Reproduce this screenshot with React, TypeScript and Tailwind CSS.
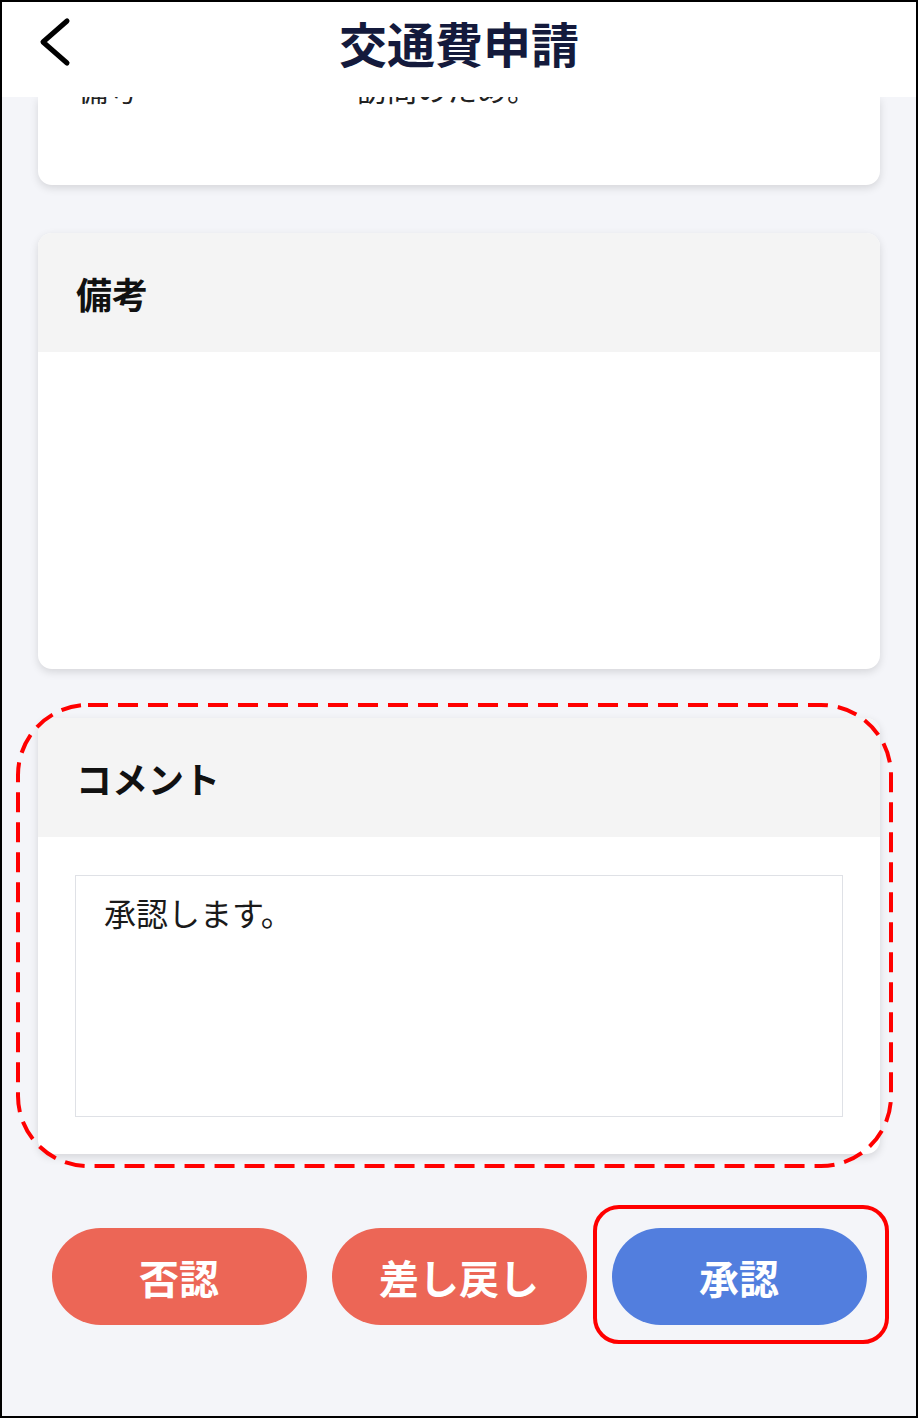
import React from 'react';

const font = { fontFamily: '"Noto Sans CJK JP", "Noto Sans", sans-serif' };

function SectionCard({ title, children }: { title: string; children?: React.ReactNode }) {
  return (
    <div className="bg-white rounded-[14px] overflow-hidden shadow-[0_3px_8px_rgba(0,0,0,0.13)]">
      <div className="h-[119px] bg-[#f4f4f4] flex items-center pl-[38px]">
        <h2 className="text-[36px] font-bold text-[#111] leading-none">{title}</h2>
      </div>
      <div className="h-[317px]">{children}</div>
    </div>
  );
}

export default function App() {
  return (
    <div style={font} className="w-[918px] h-[1418px] border-2 border-black bg-[#f4f5f9] overflow-hidden">
      {/* App bar */}
      <header className="h-[95px] bg-white relative flex justify-center pt-[14px]">
        <svg className="absolute left-[36px] top-[14px]" width="36" height="52" viewBox="0 0 36 52" fill="none">
          <path d="M29 5 L5 26 L29 47" stroke="#000" strokeWidth="5" strokeLinecap="round" strokeLinejoin="round" />
        </svg>
        <h1 className="text-[48px] font-bold leading-[52px] text-[#141a3c]">交通費申請</h1>
      </header>

      <main className="px-9">
        {/* previous card, scrolled under the header */}
        <div className="h-[88px] bg-white rounded-b-[14px] overflow-hidden shadow-[0_3px_8px_rgba(0,0,0,0.13)]">
          <div className="-mt-[31px] flex text-[30px] leading-[45px] text-[#222]">
            <span className="pl-[40px] w-[319px]">備考</span>
            <span>訪問のため。</span>
          </div>
        </div>

        <div className="mt-12">
          <SectionCard title="備考" />
        </div>

        <div className="mt-[49px] relative">
          <SectionCard title="コメント">
            <div className="px-[37px] pt-[38px]">
              <div className="h-[242px] border border-[#dfe1e6] px-[28px] pt-3 text-[32px] leading-[48px] text-[#1a1a1a]">
                承認します。
              </div>
            </div>
          </SectionCard>
          <svg className="absolute -left-[22px] -top-[15px] pointer-events-none" width="877" height="465" viewBox="0 0 877 465" fill="none">
            <rect x="2" y="2" width="873" height="461" rx="70" stroke="#ff0000" strokeWidth="4" strokeDasharray="20 10" />
          </svg>
        </div>
      </main>

      <div className="mt-[74px] flex justify-center gap-[25px]">
        {['否認', '差し戻し'].map((label) => (
          <button key={label} className="w-[255px] h-[97px] rounded-full bg-[#ec6656] text-white text-[40px] font-bold">
            {label}
          </button>
        ))}
        <div className="relative">
          <button className="w-[255px] h-[97px] rounded-full bg-[#527ede] text-white text-[40px] font-bold">
            承認
          </button>
          <div className="absolute -left-[19px] -right-[22px] -top-[23px] -bottom-[19px] border-4 border-[#ff0000] rounded-[26px] pointer-events-none" />
        </div>
      </div>
    </div>
  );
}
